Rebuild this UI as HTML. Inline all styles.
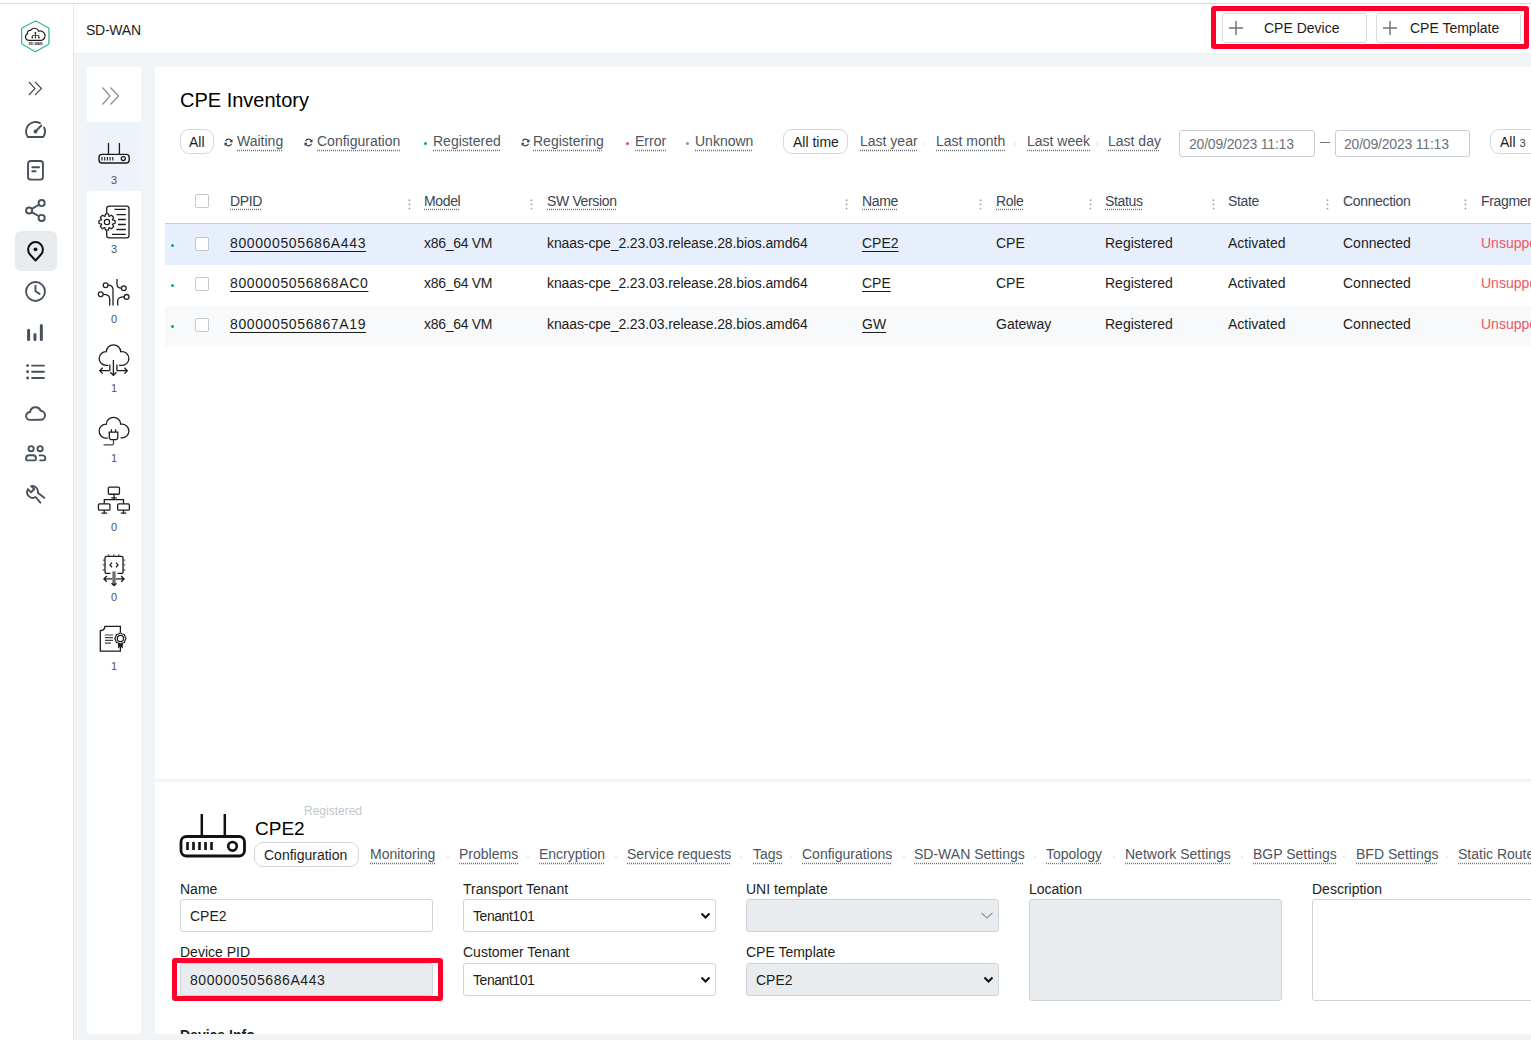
<!DOCTYPE html>
<html><head><meta charset="utf-8">
<style>
*{box-sizing:border-box;margin:0;padding:0}
html,body{width:1531px;height:1040px;overflow:hidden;background:#fff;font-family:"Liberation Sans",sans-serif;color:#1d1d1b;font-size:14px}
.abs{position:absolute}
#topline{left:0;top:3px;width:1531px;height:1px;background:#d8d9db}
#sidebar{left:0;top:4px;width:73px;height:1036px;background:#fff}
#sideborder{left:73px;top:4px;width:1px;height:1036px;background:#e3e8ee}
#header{left:74px;top:4px;width:1457px;height:49px;background:#fff}
#headborder{left:74px;top:53px;width:1457px;height:1px;background:#eef1f4}
#graybg{left:74px;top:54px;width:1457px;height:986px;background:#f2f5f8}
#sec{left:87px;top:67px;width:54px;height:967px;background:#fff;border-radius:3px}
#main{left:155px;top:67px;width:1376px;height:712px;background:#fff;border-radius:3px 0 0 0}
#bottom{left:155px;top:782px;width:1376px;height:252px;background:#fff}
.t{position:absolute;white-space:nowrap;line-height:1}
.cnt{left:87px;width:54px;text-align:center;font-size:11px;color:#4a5561}
.btn{top:13px;height:30px;border:1px solid #d9dce1;border-radius:3px;background:#fff}
.pill{border:1px solid #d3d6db;border-radius:9px;background:#fff}
.flt{color:#4d5460}
.dot{text-decoration:underline dotted #6c727c;text-underline-offset:4px}
.ul{text-decoration:underline;text-underline-offset:3px}
.sdot{width:3px;height:3px;border-radius:50%}
.inp{border:1px solid #c8ccd2;border-radius:3px;background:#fff}
.cb{width:14px;height:14px;border:1px solid #c4c8ce;border-radius:2px;background:#fff}
.th{color:#3c4350;letter-spacing:-0.35px;text-underline-offset:3px}
.rz{top:195px;color:#9aa0a8;font-size:13px}
.td{color:#1d1d1b}
.sep{width:2px;height:2px;border-radius:50%;background:#e3e6ea}
.lbl{color:#1d1d1b}
.inp2{border:1px solid #ced4da;border-radius:3px;background:#fff}


</style></head><body>
<div id="topline" class="abs"></div>
<div id="sidebar" class="abs"></div>
<div id="sideborder" class="abs"></div>
<div id="header" class="abs"></div>
<div id="headborder" class="abs"></div>
<div id="graybg" class="abs"></div>
<div id="sec" class="abs"></div>
<div id="main" class="abs"></div>
<div id="bottom" class="abs"></div>

<div class="t" style="left:86px;top:23px;font-size:14px;color:#1d1d1b;letter-spacing:-0.25px">SD-WAN</div>
<div class="t" style="left:180px;top:90px;font-size:20px;color:#000">CPE Inventory</div>

<!-- LEFT SIDEBAR ICONS -->
<svg class="abs" style="left:16px;top:16px" width="40" height="40" viewBox="0 0 40 40">
  <path d="M19.4,5.3 Q19.4,5.3 20.6,5.3 L32.3,11.8 Q33,12.3 33,13.2 V26.8 Q33,27.7 32.3,28.2 L20.6,35.2 Q19.4,35.8 18.3,35.2 L6.5,28.2 Q5.6,27.7 5.6,26.8 V13.2 Q5.6,12.3 6.5,11.8 L18.3,5.5 Q19.4,4.9 20.6,5.5" fill="none" stroke="#3db39e" stroke-width="1.3"/>
  <path transform="translate(39,0) scale(-1,1)" d="M13.2,24.3 H26.2 A3.4,3.4 0 0 0 27.5,17.8 A2.6,2.6 0 0 0 24.5,14.4 A4.6,4.6 0 0 0 16.3,15.2 A3.6,3.6 0 0 0 13.2,24.3 Z" fill="none" stroke="#1d1d1b" stroke-width="1.15"/>
  <path d="M19.4,16.5 V21.3 M16.3,21.5 V19.5 H22.8 V21.5" fill="none" stroke="#1d1d1b" stroke-width="0.8"/>
  <circle cx="19.4" cy="17" r="0.9" fill="#1d1d1b"/><circle cx="16.3" cy="21.6" r="0.9" fill="#1d1d1b"/><circle cx="22.8" cy="21.6" r="0.9" fill="#1d1d1b"/><circle cx="19.4" cy="21.6" r="0.8" fill="#1d1d1b"/>
  <text x="19.5" y="28.7" font-size="3.4" font-family="Liberation Sans" font-weight="bold" text-anchor="middle" fill="#1d1d1b" textLength="14" lengthAdjust="spacingAndGlyphs">SD-WAN</text>
</svg>
<svg class="abs" style="left:28px;top:81px" width="16" height="15" viewBox="0 0 16 15">
  <path d="M1,1 L7,7.5 L1,14 M7,1 L13.5,7.5 L7,14" fill="none" stroke="#4a4f57" stroke-width="1.2"/>
</svg>
<svg class="abs" style="left:20px;top:115px" width="30" height="30" viewBox="0 0 30 30">
  <path d="M24.1,12.5 A9.5,9.5 0 0 1 23.24,22 H7.76 A9.5,9.5 0 0 1 19.96,8.11" fill="none" stroke="#47515d" stroke-width="1.9" stroke-linecap="round" stroke-linejoin="round"/>
  <path d="M15.5,16.5 L21.3,10.5" stroke="#47515d" stroke-width="1.9" stroke-linecap="round"/>
  <circle cx="15.5" cy="16.5" r="1.9" fill="#47515d"/>
</svg>
<svg class="abs" style="left:26px;top:159px" width="20" height="24" viewBox="0 0 20 24">
  <rect x="2.05" y="1.95" width="14.9" height="18.7" rx="2.6" fill="none" stroke="#47515d" stroke-width="1.9"/>
  <path d="M6.3,8.3 H13 M6.3,12.3 H9.6" stroke="#47515d" stroke-width="1.9" stroke-linecap="round"/>
</svg>
<svg class="abs" style="left:24px;top:198px" width="24" height="26" viewBox="0 0 24 26">
  <g fill="none" stroke="#47515d" stroke-width="1.9">
  <circle cx="5.1" cy="12.5" r="3.05"/><circle cx="17.65" cy="5.1" r="3.05"/><circle cx="17.65" cy="19.9" r="3.05"/>
  <path d="M7.8,10.9 L15,6.7 M7.8,14.1 L15,18.3"/></g>
</svg>
<div class="abs" style="left:15px;top:231px;width:42px;height:40px;background:#e9ecef;border-radius:6px"></div>
<svg class="abs" style="left:26px;top:240px" width="20" height="24" viewBox="0 0 20 24">
  <path d="M9.5,20.5 L4.03,14.48 A7.4,7.4 0 1 1 14.97,14.48 Z" fill="none" stroke="#111" stroke-width="2" stroke-linejoin="round"/>
  <circle cx="9.5" cy="9.3" r="1.9" fill="#111"/>
</svg>
<svg class="abs" style="left:24px;top:280px" width="24" height="24" viewBox="0 0 24 24">
  <circle cx="11.5" cy="11.5" r="9.45" fill="none" stroke="#47515d" stroke-width="1.9"/>
  <path d="M11.5,5.6 V11.3 L15.6,13.9" fill="none" stroke="#47515d" stroke-width="1.9" stroke-linecap="round" stroke-linejoin="round"/>
</svg>
<svg class="abs" style="left:26px;top:323px" width="20" height="20" viewBox="0 0 20 20">
  <path d="M2.6,7.3 V16.4 M8.95,11.6 V16.4 M15.35,2.5 V16.4" stroke="#47515d" stroke-width="3" stroke-linecap="round"/>
</svg>
<svg class="abs" style="left:25px;top:363px" width="22" height="19" viewBox="0 0 22 19">
  <circle cx="2.6" cy="2.6" r="1.45" fill="#47515d"/><circle cx="2.6" cy="8.8" r="1.45" fill="#47515d"/><circle cx="2.6" cy="15" r="1.45" fill="#47515d"/>
  <path d="M7.1,2.6 H19 M7.1,8.8 H19 M7.1,15 H19" stroke="#47515d" stroke-width="1.9" stroke-linecap="round"/>
</svg>
<svg class="abs" style="left:24px;top:404px" width="24" height="19" viewBox="0 0 24 19">
  <path d="M6,15.85 A3.9,3.9 0 0 1 2.1,12 A3.9,3.9 0 0 1 6.1,8.1 A5.45,5.45 0 0 1 16.6,6.7 A4.55,4.55 0 0 1 21,11.25 A4.55,4.55 0 0 1 16.45,15.8 Z" fill="none" stroke="#47515d" stroke-width="1.95" stroke-linejoin="round"/>
</svg>
<svg class="abs" style="left:24px;top:444px" width="24" height="20" viewBox="0 0 24 20">
  <g fill="none" stroke="#47515d" stroke-width="1.9" stroke-linecap="round" stroke-linejoin="round">
  <circle cx="7.1" cy="4.7" r="2.6"/><circle cx="16.1" cy="4.7" r="2.6"/>
  <path d="M3.3,16.4 H10.7 A1.2,1.2 0 0 0 11.9,15.2 V14.3 A3,3 0 0 0 8.9,11.3 H5.1 A3,3 0 0 0 2.1,14.3 V15.2 A1.2,1.2 0 0 0 3.3,16.4 Z"/>
  <path d="M15.6,11.4 H18.6 A2.6,2.6 0 0 1 21.2,14 V15.3 A1.1,1.1 0 0 1 20.1,16.4 H16.2"/></g>
</svg>
<svg class="abs" style="left:25px;top:484px" width="22" height="21" viewBox="0 0 22 21">
  <path d="M3,5.2 L6,8.3 L9.2,5.2 L6.1,2.1 A5.6,5.6 0 0 1 12.8,8.7 L19.2,13.8 M15.3,18.7 L10.6,13 A5.6,5.6 0 0 1 3,5.2" fill="none" stroke="#47515d" stroke-width="1.9" stroke-linecap="round" stroke-linejoin="round"/>
</svg>

<!-- SECONDARY PANEL -->
<svg class="abs" style="left:101px;top:86px" width="21" height="20" viewBox="0 0 21 20">
  <path d="M1.5,1.5 L9,10 L1.5,18.5 M9.5,1.5 L17.5,10 L9.5,18.5" fill="none" stroke="#8a8f96" stroke-width="1.3"/>
</svg>
<div class="abs" style="left:87px;top:122px;width:54px;height:69px;background:#eef2f9"></div>
<svg class="abs" style="left:97px;top:142px" width="34" height="23" viewBox="0 0 34 23">
  <path d="M11.5,1 V12.5 M22.4,1 V12.5" stroke="#1d1d1b" stroke-width="1.3"/>
  <rect x="2" y="12.4" width="30.2" height="8.6" rx="3" fill="none" stroke="#1d1d1b" stroke-width="1.4"/>
  <path d="M5,15 V18.5 M7.7,15 V18.5 M10.4,15 V18.5 M13.1,15 V18.5 M15.8,15 V18.5" stroke="#1d1d1b" stroke-width="1.1"/>
  <circle cx="26.3" cy="16.6" r="2" fill="none" stroke="#1d1d1b" stroke-width="1.3"/>
</svg>
<div class="t cnt" style="top:175px">3</div>
<svg class="abs" style="left:98px;top:205px" width="33" height="34" viewBox="0 0 33 34">
  <path d="M8.7,8 V3.6 A2.4,2.4 0 0 1 11.1,1.2 H28.6 A2.4,2.4 0 0 1 31,3.6 V30.4 A2.4,2.4 0 0 1 28.6,32.8 H11.1 A2.4,2.4 0 0 1 8.7,30.4 V26" fill="none" stroke="#1d1d1b" stroke-width="1.3"/>
  <path d="M16.5,4.4 H27.8 M18.5,9.6 H27.8 M20,14.5 H27.8 M20,19.5 H27.8 M18.5,24.5 H27.8 M14,29.4 H27.8" stroke="#1d1d1b" stroke-width="1.3"/>
  <g transform="translate(9,17) scale(1.15)">
    <path d="M-1.3,-7 H1.3 L1.8,-4.8 L3.9,-5.9 L5.8,-4 L4.7,-1.9 L7,-1.3 V1.3 L4.7,1.9 L5.8,4 L3.9,5.9 L1.8,4.8 L1.3,7 H-1.3 L-1.8,4.8 L-3.9,5.9 L-5.8,4 L-4.7,1.9 L-7,1.3 V-1.3 L-4.7,-1.9 L-5.8,-4 L-3.9,-5.9 L-1.8,-4.8 Z" fill="#fff" stroke="#1d1d1b" stroke-width="1.1" stroke-linejoin="round"/>
    <circle cx="0" cy="0" r="2.3" fill="none" stroke="#1d1d1b" stroke-width="1.1"/>
  </g>
</svg>
<div class="t cnt" style="top:244px">3</div>
<svg class="abs" style="left:97px;top:278px" width="34" height="30" viewBox="0 0 34 30">
  <g fill="none" stroke="#222" stroke-width="1.3">
    <circle cx="8.6" cy="7.2" r="2.4"/><circle cx="3.75" cy="16.3" r="2.4"/><circle cx="26.8" cy="10.2" r="2.4"/><circle cx="29.6" cy="18.9" r="2.4"/>
    <path d="M11,7.2 Q16,7.2 16,12 V27.5 M6.15,16.3 Q12.7,16.3 12.7,21 V27.5 M20,1 V6 Q20,10.2 24.4,10.2 M27.2,18.9 Q20.7,18.9 20.7,23 V27.5"/>
  </g>
</svg>
<div class="t cnt" style="top:314px">0</div>
<svg class="abs" style="left:98px;top:344px" width="32" height="34" viewBox="0 0 32 34">
  <g fill="none" stroke="#1d1d1b" stroke-width="1.3">
    <path d="M10.3,21.3 H8 A6.8,6.8 0 0 1 1.2,14.5 A6.8,6.8 0 0 1 8.31,7.7 A7.2,7.2 0 0 1 22.7,7.73 A6.9,6.9 0 0 1 30.9,14.5 A6.9,6.9 0 0 1 24,21.4 H21" />
    <path d="M11.8,20.5 V26.7 M18.9,20.5 V26.7 M15.4,16 V31.4 M12.3,28.3 L15.4,31.4 L18.5,28.3 M11.8,26.7 H1.8 M4.7,23.8 L1.8,26.7 L4.7,29.6 M18.9,26.7 H29.3 M26.4,23.8 L29.3,26.7 L26.4,29.6"/>
  </g>
</svg>
<div class="t cnt" style="top:383px">1</div>
<svg class="abs" style="left:98px;top:416px" width="32" height="33" viewBox="0 0 32 33">
  <g fill="none" stroke="#1d1d1b" stroke-width="1.3">
    <path d="M9.8,21.6 H8 A6.8,6.8 0 0 1 1.2,14.5 A6.8,6.8 0 0 1 8.31,7.7 A7.2,7.2 0 0 1 22.7,7.73 A6.9,6.9 0 0 1 30.9,14.5 A6.9,6.9 0 0 1 24,21.4 H22.5" transform="translate(0,0.5)"/>
    <path d="M13.4,13.2 V16.2 M17.6,13.2 V16.2 M11.3,16.2 H19.8 V21.3 A2.4,2.4 0 0 1 17.4,23.7 H13.7 A2.4,2.4 0 0 1 11.3,21.3 Z"/>
    <path d="M15.5,23.7 V27.4 A1.4,1.4 0 0 1 14.1,28.8 H5.5" stroke="#444"/>
  </g>
</svg>
<div class="t cnt" style="top:453px">1</div>
<svg class="abs" style="left:97px;top:485px" width="34" height="31" viewBox="0 0 34 31">
  <g fill="none" stroke="#1d1d1b" stroke-width="1.3">
    <rect x="11.35" y="2.05" width="11.1" height="7.2" rx="1"/>
    <path d="M17,9.3 V14.6 M14.2,12.9 H19.8 M7.3,18.8 V14.6 H26.5 V18.8"/>
    <rect x="1.45" y="18.95" width="11.5" height="6.2" rx="1"/>
    <rect x="20.65" y="18.95" width="11.7" height="6.2" rx="1"/>
    <path d="M7.2,25 V28 M4.5,28.2 H10 M26.5,25 V28 M23.8,28.2 H29.3"/>
  </g>
</svg>
<div class="t cnt" style="top:522px">0</div>
<svg class="abs" style="left:102px;top:553px" width="24" height="34" viewBox="0 0 24 34">
  <g fill="none" stroke="#1d1d1b" stroke-width="1.3">
    <path d="M8.5,20.4 H4.5 A1.5,1.5 0 0 1 3,18.9 V4.8 A1.5,1.5 0 0 1 4.5,3.3 H19.5 A1.5,1.5 0 0 1 21,4.8 V18.9 A1.5,1.5 0 0 1 19.5,20.4 H15.5"/>
    <path d="M6.8,1.2 V3.3 M11.8,1.2 V3.3 M16.8,1.2 V3.3 M0.8,7.2 H3 M0.8,11.9 H3 M0.8,17 H3 M21,7.2 H23.2 M21,11.9 H23.2 M21,17 H23.2" stroke="#555"/>
    <path d="M10,9.6 L8,11.9 L10,14.2 M14,9.6 L16,11.9 L14,14.2"/>
  </g>
  <rect x="10.2" y="18.5" width="3.6" height="12.5" fill="#8a8a8a"/>
  <path d="M12,18.5 V31" stroke="#555" stroke-width="1"/>
  <g fill="none" stroke="#1d1d1b" stroke-width="1.4">
    <path d="M9.6,30.2 L12,32.6 L14.4,30.2 M10.2,25.9 H2 M4.8,23.1 L2,25.9 L4.8,28.7 M13.8,25.9 H22 M19.2,23.1 L22,25.9 L19.2,28.7"/>
  </g>
</svg>
<div class="t cnt" style="top:592px">0</div>
<svg class="abs" style="left:99px;top:624px" width="30" height="30" viewBox="0 0 30 30">
  <g fill="none" stroke="#1d1d1b" stroke-width="1.3">
    <path d="M21.4,8.3 V2.3 H6 Q5.5,6.3 1.3,6.7 V27.2 H21.4 V21.5"/>
    <path d="M6,11 H14 M6,13.7 H14 M6,16.4 H14 M6,19.2 H12" stroke="#444" stroke-width="1.2"/>
  </g>
  <path d="M19,18.5 V24.5 L21.4,22.6 L23.8,24.5 V18.5 Z" fill="#1d1d1b"/>
  <polygon points="21.40,8.80 23.28,9.97 25.43,10.47 25.93,12.62 27.10,14.50 25.93,16.38 25.43,18.53 23.28,19.03 21.40,20.20 19.52,19.03 17.37,18.53 16.87,16.38 15.70,14.50 16.87,12.62 17.37,10.47 19.52,9.97" fill="#fff" stroke="#1d1d1b" stroke-width="1.2" stroke-linejoin="round"/>
  <circle cx="21.4" cy="14.5" r="3.1" fill="none" stroke="#1d1d1b" stroke-width="1.2"/>
</svg>
<div class="t cnt" style="top:661px">1</div>

<!-- HEADER BUTTONS -->
<div class="abs" style="left:1211px;top:6px;width:318px;height:43px;border:5px solid #fe0029;border-radius:3px"></div>
<div class="abs btn" style="left:1222px;top:13px;width:145px"></div>
<div class="abs btn" style="left:1376px;top:13px;width:145px"></div>
<svg class="abs" style="left:1228px;top:20px" width="16" height="16" viewBox="0 0 16 16"><path d="M8,1 V15 M1,8 H15" stroke="#6b7079" stroke-width="1.4"/></svg>
<svg class="abs" style="left:1382px;top:20px" width="16" height="16" viewBox="0 0 16 16"><path d="M8,1 V15 M1,8 H15" stroke="#6b7079" stroke-width="1.4"/></svg>
<div class="t" style="left:1264px;top:21px;color:#1d1d1b">CPE Device</div>
<div class="t" style="left:1410px;top:21px;color:#1d1d1b">CPE Template</div>

<!-- FILTERS -->
<div class="abs pill" style="left:180px;top:129px;width:34px;height:25px"></div>
<div class="t" style="left:189px;top:135px;color:#1d1d1b">All</div>
<svg class="abs ref" style="left:224px;top:138px" width="9" height="9" viewBox="0 0 9 9"><path d="M7.6,3.5 A3.3,3.3 0 0 0 1.4,3.2 M1.4,5.5 A3.3,3.3 0 0 0 7.6,5.8 M6,3.6 H8 V1.6 M3,5.4 H1 V7.4" fill="none" stroke="#3c4350" stroke-width="1.1"/></svg>
<div class="t flt dot" style="left:237px;top:134px">Waiting</div>
<svg class="abs ref" style="left:304px;top:138px" width="9" height="9" viewBox="0 0 9 9"><path d="M7.6,3.5 A3.3,3.3 0 0 0 1.4,3.2 M1.4,5.5 A3.3,3.3 0 0 0 7.6,5.8 M6,3.6 H8 V1.6 M3,5.4 H1 V7.4" fill="none" stroke="#3c4350" stroke-width="1.1"/></svg>
<div class="t flt dot" style="left:317px;top:134px">Configuration</div>
<div class="abs sdot" style="left:424px;top:142px;background:#00a88e"></div>
<div class="t flt dot" style="left:433px;top:134px">Registered</div>
<svg class="abs ref" style="left:521px;top:138px" width="9" height="9" viewBox="0 0 9 9"><path d="M7.6,3.5 A3.3,3.3 0 0 0 1.4,3.2 M1.4,5.5 A3.3,3.3 0 0 0 7.6,5.8 M6,3.6 H8 V1.6 M3,5.4 H1 V7.4" fill="none" stroke="#3c4350" stroke-width="1.1"/></svg>
<div class="t flt dot" style="left:533px;top:134px">Registering</div>
<div class="abs sdot" style="left:626px;top:142px;background:#f0424f"></div>
<div class="t flt dot" style="left:635px;top:134px">Error</div>
<div class="abs sdot" style="left:686px;top:142px;background:#9b7ee0"></div>
<div class="t flt dot" style="left:695px;top:134px">Unknown</div>

<div class="abs pill" style="left:783px;top:129px;width:65px;height:25px"></div>
<div class="t" style="left:793px;top:135px;color:#1d1d1b">All time</div>
<div class="t flt dot" style="left:860px;top:134px">Last year</div>
<div class="t flt dot" style="left:936px;top:134px">Last month</div>
<div class="t flt dot" style="left:1027px;top:134px">Last week</div>
<div class="t flt dot" style="left:1108px;top:134px">Last day</div>
<div class="abs inp" style="left:1179px;top:130px;width:136px;height:27px"></div>
<div class="t" style="left:1189px;top:137px;color:#6c727c;letter-spacing:-0.2px">20/09/2023 11:13</div>
<div class="abs" style="left:1320px;top:142px;width:10px;height:1px;background:#6c727c"></div>
<div class="abs inp" style="left:1335px;top:130px;width:135px;height:27px"></div>
<div class="t" style="left:1344px;top:137px;color:#6c727c;letter-spacing:-0.2px">20/09/2023 11:13</div>
<div class="abs pill" style="left:1490px;top:129px;width:60px;height:25px"></div>
<div class="t" style="left:1500px;top:135px;color:#1d1d1b">All <span style="font-size:11px;color:#3c4350">3</span></div>

<!-- TABLE HEADER -->
<div class="abs cb" style="left:195px;top:194px"></div>
<div class="t th dot" style="left:230px;top:194px">DPID</div>
<svg class="abs" style="left:407.5px;top:198px" width="3" height="12" viewBox="0 0 3 12"><g fill="#98a0aa"><circle cx="1.5" cy="2.2" r="0.9"/><circle cx="1.5" cy="6.4" r="0.9"/><circle cx="1.5" cy="10.6" r="0.9"/></g></svg>
<div class="t th dot" style="left:424px;top:194px">Model</div>
<svg class="abs" style="left:529.5px;top:198px" width="3" height="12" viewBox="0 0 3 12"><g fill="#98a0aa"><circle cx="1.5" cy="2.2" r="0.9"/><circle cx="1.5" cy="6.4" r="0.9"/><circle cx="1.5" cy="10.6" r="0.9"/></g></svg>
<div class="t th dot" style="left:547px;top:194px">SW Version</div>
<svg class="abs" style="left:845.1px;top:198px" width="3" height="12" viewBox="0 0 3 12"><g fill="#98a0aa"><circle cx="1.5" cy="2.2" r="0.9"/><circle cx="1.5" cy="6.4" r="0.9"/><circle cx="1.5" cy="10.6" r="0.9"/></g></svg>
<div class="t th dot" style="left:862px;top:194px">Name</div>
<svg class="abs" style="left:979.0px;top:198px" width="3" height="12" viewBox="0 0 3 12"><g fill="#98a0aa"><circle cx="1.5" cy="2.2" r="0.9"/><circle cx="1.5" cy="6.4" r="0.9"/><circle cx="1.5" cy="10.6" r="0.9"/></g></svg>
<div class="t th dot" style="left:996px;top:194px">Role</div>
<svg class="abs" style="left:1088.5px;top:198px" width="3" height="12" viewBox="0 0 3 12"><g fill="#98a0aa"><circle cx="1.5" cy="2.2" r="0.9"/><circle cx="1.5" cy="6.4" r="0.9"/><circle cx="1.5" cy="10.6" r="0.9"/></g></svg>
<div class="t th dot" style="left:1105px;top:194px">Status</div>
<svg class="abs" style="left:1211.5px;top:198px" width="3" height="12" viewBox="0 0 3 12"><g fill="#98a0aa"><circle cx="1.5" cy="2.2" r="0.9"/><circle cx="1.5" cy="6.4" r="0.9"/><circle cx="1.5" cy="10.6" r="0.9"/></g></svg>
<div class="t th" style="left:1228px;top:194px">State</div>
<svg class="abs" style="left:1326.0px;top:198px" width="3" height="12" viewBox="0 0 3 12"><g fill="#98a0aa"><circle cx="1.5" cy="2.2" r="0.9"/><circle cx="1.5" cy="6.4" r="0.9"/><circle cx="1.5" cy="10.6" r="0.9"/></g></svg>
<div class="t th" style="left:1343px;top:194px">Connection</div>
<svg class="abs" style="left:1463.5px;top:198px" width="3" height="12" viewBox="0 0 3 12"><g fill="#98a0aa"><circle cx="1.5" cy="2.2" r="0.9"/><circle cx="1.5" cy="6.4" r="0.9"/><circle cx="1.5" cy="10.6" r="0.9"/></g></svg>
<div class="t th" style="left:1481px;top:194px">Fragmentation</div>
<div class="abs" style="left:165px;top:223px;width:1366px;height:1px;background:#c9cdd3"></div>

<!-- ROWS -->
<div class="abs" style="left:165px;top:224px;width:1366px;height:41px;background:#e8effc"></div>
<div class="abs" style="left:165px;top:306px;width:1366px;height:40px;background:#f8f9fa"></div>
<div class="abs sdot" style="left:171px;top:244px;background:#00a88e"></div>
<div class="abs cb" style="left:195px;top:237px"></div>
<div class="t td ul" style="left:230px;top:236px;letter-spacing:0.62px">800000505686A443</div>
<div class="t td" style="left:424px;top:236px;letter-spacing:-0.3px">x86_64 VM</div>
<div class="t td" style="left:547px;top:236px;letter-spacing:-0.1px">knaas-cpe_2.23.03.release.28.bios.amd64</div>
<div class="t td ul" style="left:862px;top:236px">CPE2</div>
<div class="t td" style="left:996px;top:236px">CPE</div>
<div class="t td" style="left:1105px;top:236px">Registered</div>
<div class="t td" style="left:1228px;top:236px">Activated</div>
<div class="t td" style="left:1343px;top:236px">Connected</div>
<div class="t td" style="left:1481px;top:236px;color:#f0555f">Unsupported</div>
<div class="abs sdot" style="left:171px;top:284px;background:#00a88e"></div>
<div class="abs cb" style="left:195px;top:277px"></div>
<div class="t td ul" style="left:230px;top:276px;letter-spacing:0.62px">8000005056868AC0</div>
<div class="t td" style="left:424px;top:276px;letter-spacing:-0.3px">x86_64 VM</div>
<div class="t td" style="left:547px;top:276px;letter-spacing:-0.1px">knaas-cpe_2.23.03.release.28.bios.amd64</div>
<div class="t td ul" style="left:862px;top:276px">CPE</div>
<div class="t td" style="left:996px;top:276px">CPE</div>
<div class="t td" style="left:1105px;top:276px">Registered</div>
<div class="t td" style="left:1228px;top:276px">Activated</div>
<div class="t td" style="left:1343px;top:276px">Connected</div>
<div class="t td" style="left:1481px;top:276px;color:#f0555f">Unsupported</div>
<div class="abs sdot" style="left:171px;top:325px;background:#00a88e"></div>
<div class="abs cb" style="left:195px;top:318px"></div>
<div class="t td ul" style="left:230px;top:317px;letter-spacing:0.62px">8000005056867A19</div>
<div class="t td" style="left:424px;top:317px;letter-spacing:-0.3px">x86_64 VM</div>
<div class="t td" style="left:547px;top:317px;letter-spacing:-0.1px">knaas-cpe_2.23.03.release.28.bios.amd64</div>
<div class="t td ul" style="left:862px;top:317px">GW</div>
<div class="t td" style="left:996px;top:317px">Gateway</div>
<div class="t td" style="left:1105px;top:317px">Registered</div>
<div class="t td" style="left:1228px;top:317px">Activated</div>
<div class="t td" style="left:1343px;top:317px">Connected</div>
<div class="t td" style="left:1481px;top:317px;color:#f0555f">Unsupported</div>

<!-- BOTTOM PANEL -->
<svg class="abs" style="left:179px;top:813px" width="68" height="45" viewBox="0 0 68 45">
  <path d="M22.8,1 V24 M45.8,1 V24" stroke="#111" stroke-width="2.5"/>
  <rect x="2" y="23.5" width="63.5" height="19.5" rx="5.5" fill="none" stroke="#111" stroke-width="2.8"/>
  <path d="M8.5,29 V37 M14.5,29 V37 M20.5,29 V37 M26.5,29 V37 M32.5,29 V37" stroke="#111" stroke-width="2.6"/>
  <circle cx="53.5" cy="33.3" r="4.3" fill="none" stroke="#111" stroke-width="2.6"/>
</svg>
<div class="t" style="left:304px;top:805px;font-size:12px;color:#c3c7cc">Registered</div>
<div class="t" style="left:255px;top:819px;font-size:19px;color:#000">CPE2</div>
<div class="abs pill" style="left:254px;top:842px;width:105px;height:25px;border-radius:9px"></div>
<div class="t" style="left:264px;top:848px;color:#1d1d1b">Configuration</div>
<div class="t flt dot" style="left:370px;top:847px">Monitoring</div>
<div class="t flt dot" style="left:459px;top:847px">Problems</div>
<div class="t flt dot" style="left:539px;top:847px">Encryption</div>
<div class="t flt dot" style="left:627px;top:847px">Service requests</div>
<div class="t flt dot" style="left:753px;top:847px">Tags</div>
<div class="t flt dot" style="left:802px;top:847px">Configurations</div>
<div class="t flt dot" style="left:914px;top:847px">SD-WAN Settings</div>
<div class="t flt dot" style="left:1046px;top:847px">Topology</div>
<div class="t flt dot" style="left:1125px;top:847px">Network Settings</div>
<div class="t flt dot" style="left:1253px;top:847px">BGP Settings</div>
<div class="t flt dot" style="left:1356px;top:847px">BFD Settings</div>
<div class="t flt dot" style="left:1458px;top:847px">Static Routes</div>

<div class="t lbl" style="left:180px;top:882px">Name</div>
<div class="abs inp2" style="left:180px;top:899px;width:253px;height:33px"></div>
<div class="t td" style="left:190px;top:909px">CPE2</div>
<div class="t lbl" style="left:180px;top:945px">Device PID</div>
<div class="abs inp2" style="left:180px;top:963px;width:253px;height:33px;background:#e9ecef"></div>
<div class="t td" style="left:190px;top:973px;letter-spacing:0.58px">800000505686A443</div>
<div class="abs" style="left:172px;top:958px;width:271px;height:43px;border:5px solid #fe0029;border-radius:3px"></div>

<div class="t lbl" style="left:463px;top:882px">Transport Tenant</div>
<div class="abs inp2" style="left:463px;top:899px;width:253px;height:33px"></div>
<div class="t td" style="left:473px;top:909px;letter-spacing:-0.45px">Tenant101</div>
<svg class="abs" style="left:700px;top:911px" width="11" height="9" viewBox="0 0 11 9"><path d="M1.5,2.5 L5.5,6.5 L9.5,2.5" fill="none" stroke="#111" stroke-width="2"/></svg>
<div class="t lbl" style="left:463px;top:945px">Customer Tenant</div>
<div class="abs inp2" style="left:463px;top:963px;width:253px;height:33px"></div>
<div class="t td" style="left:473px;top:973px;letter-spacing:-0.45px">Tenant101</div>
<svg class="abs" style="left:700px;top:975px" width="11" height="9" viewBox="0 0 11 9"><path d="M1.5,2.5 L5.5,6.5 L9.5,2.5" fill="none" stroke="#111" stroke-width="2"/></svg>

<div class="t lbl" style="left:746px;top:882px">UNI template</div>
<div class="abs inp2" style="left:746px;top:899px;width:253px;height:33px;background:#e9ecef"></div>
<svg class="abs" style="left:980px;top:911px" width="14" height="9" viewBox="0 0 14 9"><path d="M1.5,2 L7,7 L12.5,2" fill="none" stroke="#8d939b" stroke-width="1.1"/></svg>
<div class="t lbl" style="left:746px;top:945px">CPE Template</div>
<div class="abs inp2" style="left:746px;top:963px;width:253px;height:33px;background:#e9ecef"></div>
<div class="t td" style="left:756px;top:973px">CPE2</div>
<svg class="abs" style="left:983px;top:975px" width="11" height="9" viewBox="0 0 11 9"><path d="M1.5,2.5 L5.5,6.5 L9.5,2.5" fill="none" stroke="#111" stroke-width="2"/></svg>

<div class="t lbl" style="left:1029px;top:882px">Location</div>
<div class="abs inp2" style="left:1029px;top:899px;width:253px;height:102px;background:#e9ecef"></div>
<div class="t lbl" style="left:1312px;top:882px">Description</div>
<div class="abs inp2" style="left:1312px;top:899px;width:260px;height:102px"></div>
<div class="t" style="left:180px;top:1028px;font-size:14px;font-weight:bold;color:#1d1d1b">Device Info</div>
<div class="abs" style="left:155px;top:1034px;width:1376px;height:6px;background:#f2f5f8"></div>
<div class="abs sep" style="left:446.5px;top:856px"></div><div class="abs sep" style="left:526.5px;top:856px"></div><div class="abs sep" style="left:615px;top:856px"></div><div class="abs sep" style="left:740px;top:856px"></div><div class="abs sep" style="left:790px;top:856px"></div><div class="abs sep" style="left:903px;top:856px"></div><div class="abs sep" style="left:1034px;top:856px"></div><div class="abs sep" style="left:1112.5px;top:856px"></div><div class="abs sep" style="left:1241px;top:856px"></div><div class="abs sep" style="left:1343px;top:856px"></div><div class="abs sep" style="left:1446px;top:856px"></div><div class="abs sep" style="left:923.5px;top:143px"></div><div class="abs sep" style="left:1013.5px;top:143px"></div><div class="abs sep" style="left:1096px;top:143px"></div><div class="abs sep" style="left:1167px;top:143px"></div>
</body></html>
